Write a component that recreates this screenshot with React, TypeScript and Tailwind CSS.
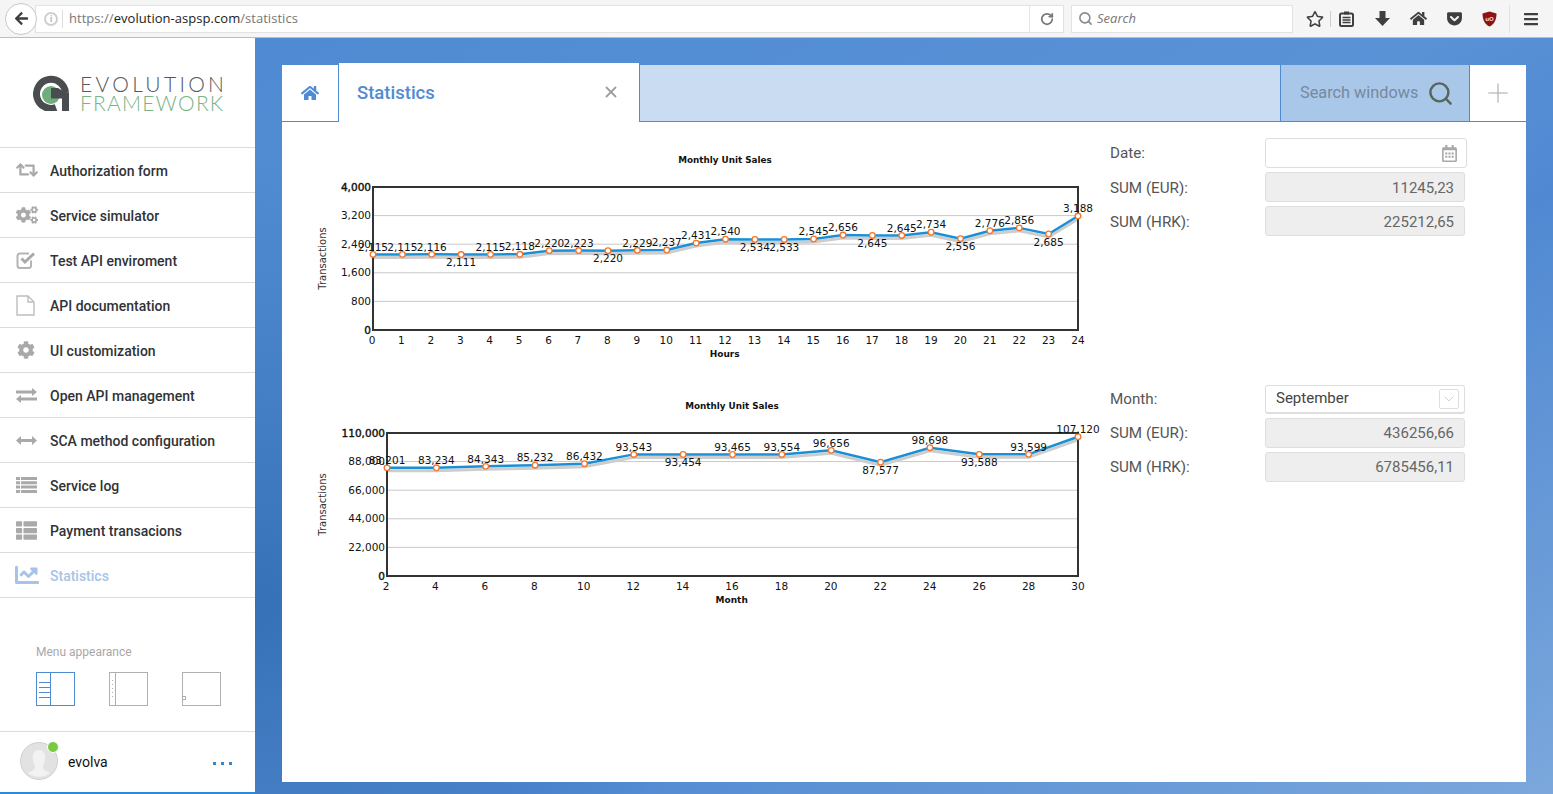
import React from 'react'
import {
  FaArrowLeft,
  FaBars,
  FaChartLine,
  FaCog,
  FaCogs,
  FaGetPocket,
  FaHome,
  FaRegCalendarAlt,
  FaRegStar,
  FaRetweet,
  FaThList,
} from 'react-icons/fa'
import { ChevronDown, Plus, RotateCw, Search, X } from 'lucide-react'

type Point = { label: string; value: number; below?: boolean }

type ChartProps = {
  box: { x: number; y: number; w: number; h: number }
  frame: { left: number; right: number; top: number; bottom: number }
  max: number
  yTicks: string[]
  xTicks: string[]
  xTitle: string
  points: Point[]
}

const hours: Point[] = [
  { label: '2,115', value: 2115 },
  { label: '2,115', value: 2115 },
  { label: '2,116', value: 2116 },
  { label: '2,111', value: 2111, below: true },
  { label: '2,115', value: 2115 },
  { label: '2,118', value: 2118 },
  { label: '2,220', value: 2220 },
  { label: '2,223', value: 2223 },
  { label: '2,220', value: 2220, below: true },
  { label: '2,229', value: 2229 },
  { label: '2,237', value: 2237 },
  { label: '2,431', value: 2431 },
  { label: '2,540', value: 2540 },
  { label: '2,534', value: 2534, below: true },
  { label: '2,533', value: 2533, below: true },
  { label: '2,545', value: 2545 },
  { label: '2,656', value: 2656 },
  { label: '2,645', value: 2645, below: true },
  { label: '2,645', value: 2645 },
  { label: '2,734', value: 2734 },
  { label: '2,556', value: 2556, below: true },
  { label: '2,776', value: 2776 },
  { label: '2,856', value: 2856 },
  { label: '2,685', value: 2685, below: true },
  { label: '3,188', value: 3188 },
]

const days: Point[] = [
  { label: '83,201', value: 83201 },
  { label: '83,234', value: 83234 },
  { label: '84,343', value: 84343 },
  { label: '85,232', value: 85232 },
  { label: '86,432', value: 86432 },
  { label: '93,543', value: 93543 },
  { label: '93,454', value: 93454, below: true },
  { label: '93,465', value: 93465 },
  { label: '93,554', value: 93554 },
  { label: '96,656', value: 96656 },
  { label: '87,577', value: 87577, below: true },
  { label: '98,698', value: 98698 },
  { label: '93,588', value: 93588, below: true },
  { label: '93,599', value: 93599 },
  { label: '107,120', value: 107120 },
]

const CheckIcon = () => (
  <svg width="21" height="19" viewBox="0 0 21 19" fill="none">
    <path d="M15 9.500 V14.500 a2.500 2.500 0 0 1 -2.500 2.500 H4 a2.500 2.500 0 0 1 -2.500 -2.500 V5 A2.500 2.500 0 0 1 4 2.500 H13" stroke="#b4b4b4" strokeWidth="2" />
    <path d="M5.500 7.500 L9 11 L18 2.500" stroke="#a9a9a9" strokeWidth="3" />
  </svg>
)

const FileIcon = () => (
  <svg width="19" height="21" viewBox="0 0 19 21" fill="none" stroke="#bdbdbd" strokeWidth="1.400">
    <path d="M1 1 H12 L18 7 V20 H1z" />
    <path d="M12 1 V7 H18" />
  </svg>
)

const SwapIcon = () => (
  <svg width="21" height="15" viewBox="0 0 21 15" fill="#a9a9a9">
    <path d="M0 2.500 H16 V0 L21 4 L16 8 V5.500 H0z" />
    <path d="M21 9.500 H5 V7 L0 11 L5 15 V12.500 H21z" />
  </svg>
)

const WideArrowIcon = () => (
  <svg width="21" height="9" viewBox="0 0 21 9" fill="#a9a9a9">
    <path d="M0 4.500 L5 0 V3 H16 V0 L21 4.500 L16 9 V6 H5 V9z" />
  </svg>
)

const ListIcon = () => (
  <svg width="21" height="16" viewBox="0 0 21 16" fill="#a9a9a9">
    <path d="M0 0 H4 V3 H0z M5 0 H21 V3 H5z M0 4.300 H4 V7.300 H0z M5 4.300 H21 V7.300 H5z M0 8.600 H4 V11.600 H0z M5 8.600 H21 V11.600 H5z M0 13 H4 V16 H0z M5 13 H21 V16 H5z" />
  </svg>
)

const menu = [
  { label: 'Authorization form', icon: <FaRetweet size={22} /> },
  { label: 'Service simulator', icon: <FaCogs size={22} /> },
  { label: 'Test API enviroment', icon: <CheckIcon /> },
  { label: 'API documentation', icon: <FileIcon /> },
  { label: 'UI customization', icon: <span className="pl-px"><FaCog size={18} /></span> },
  { label: 'Open API management', icon: <SwapIcon /> },
  { label: 'SCA method configuration', icon: <WideArrowIcon /> },
  { label: 'Service log', icon: <ListIcon /> },
  { label: 'Payment transacions', icon: <FaThList size={21} /> },
]

// chart is drawn in page coordinates, the viewBox just crops to the box
const Chart: React.FC<ChartProps> = ({ box, frame, max, yTicks, xTicks, xTitle, points }) => {
  const plotW = frame.right - frame.left
  const plotH = frame.bottom - frame.top
  const centerX = (frame.left + frame.right) / 2
  const centerY = (frame.top + frame.bottom) / 2
  const coords = points.map((p, i) => ({
    ...p,
    x: frame.left + (i * plotW) / (points.length - 1),
    y: frame.bottom - (p.value / max) * plotH,
  }))
  const line = coords.map((c) => `${c.x},${c.y}`).join(' ')
  const shadow = coords.map((c) => `${c.x},${c.y + 3}`).join(' ')

  return (
    <svg
      width={box.w}
      height={box.h}
      viewBox={`${box.x} ${box.y} ${box.w} ${box.h}`}
      className="shrink-0"
      style={{ fontFamily: '"DejaVu Sans", sans-serif' }}
    >
      {yTicks.map((_, i) =>
        i > 0 && i < yTicks.length - 1 ? (
          <line
            key={i}
            x1={frame.left}
            x2={frame.right}
            y1={frame.bottom - (i * plotH) / (yTicks.length - 1)}
            y2={frame.bottom - (i * plotH) / (yTicks.length - 1)}
            stroke="#c9c9c9"
          />
        ) : null,
      )}
      <text x={centerX - 0.5} y={frame.top - 24.5} textAnchor="middle" fontSize="8.800" fontWeight="bold" fill="#111">
        Monthly Unit Sales
      </text>
      <text transform={`translate(326 ${centerY}) rotate(-90)`} textAnchor="middle" fontSize="10" fill="#333">
        Transactions
      </text>
      <text x={centerX - 0.8} y={frame.bottom + 27} textAnchor="middle" fontSize="9" fontWeight="bold" fill="#111">
        {xTitle}
      </text>
      {yTicks.map((t, i) => (
        <text
          key={t}
          x={frame.left - 2}
          y={frame.bottom - (i * plotH) / (yTicks.length - 1) + 3.5}
          textAnchor="end"
          fontSize="10.500"
          fill="#111"
          stroke={i === 0 || i === yTicks.length - 1 ? '#111' : 'none'}
          strokeWidth="0.4"
        >
          {t}
        </text>
      ))}
      {xTicks.map((t, i) => (
        <text
          key={t}
          x={frame.left - 1 + (i * (plotW + 1)) / (xTicks.length - 1)}
          y={frame.bottom + 14}
          textAnchor="middle"
          fontSize="10.500"
          fill="#111"
        >
          {t}
        </text>
      ))}
      <polyline points={shadow} fill="none" stroke="#cdcdcd" strokeWidth="3" />
      <rect x={frame.left} y={frame.top} width={plotW} height={plotH} fill="none" stroke="#333" strokeWidth="2" />
      <polyline points={line} fill="none" stroke="#1a8fd6" strokeWidth="2.500" />
      {coords.map((c, i) => (
        <circle key={i} cx={c.x} cy={c.y} r="2.800" fill="#fff" stroke="#f4762a" strokeWidth="1.300" />
      ))}
      {coords.map((c, i) => (
        <text key={i} x={c.x} y={c.below ? c.y + 11.5 : c.y - 3.8} textAnchor="middle" fontSize="10.500" fill="#111">
          {c.label}
        </text>
      ))}
    </svg>
  )
}

const Logo = () => (
  <div className="flex items-center h-[36px]">
    <svg width="36" height="36" viewBox="0 0 36 36" className="shrink-0">
      <path d="M23 32.500 A14.500 14.500 0 1 1 32.500 18" fill="none" stroke="#4a4d4f" strokeWidth="7" />
      <circle cx="18" cy="20" r="9" fill="#6fae7c" />
      <path d="M18 13 H25 L36 20 H29 V23.500 H18z" fill="#4a4d4f" />
      <rect x="29" y="18" width="7" height="18" fill="#4a4d4f" />
    </svg>
    <div className="ml-[11px] font-['Lato',sans-serif] font-light text-[21px] leading-[19px]">
      <div className="text-[#55585a] tracking-[3.300px] whitespace-nowrap">EVOLUTION</div>
      <div className="text-[#79b488] tracking-[1.200px] whitespace-nowrap">FRAMEWORK</div>
    </div>
  </div>
)

const Sidebar = () => (
  <aside className="w-[255px] shrink-0 bg-white border-b-2 border-[#2f88d8] flex flex-col font-['Roboto',sans-serif]">
    <div className="h-[110px] flex items-center pl-[33px] border-b border-[#dcdcdc]">
      <Logo />
    </div>
    {menu.map((m) => (
      <div key={m.label} className="h-[45px] flex items-center border-b border-[#dcdcdc]">
        <span className="w-[50px] pl-[16px] text-[#a9a9a9] flex items-center">{m.icon}</span>
        <span className="pt-[3px] text-[14px] font-medium text-[#2f3338]">{m.label}</span>
      </div>
    ))}
    <div className="h-[45px] flex items-center border-b border-[#dcdcdc]">
      <span className="w-[50px] pl-[15px] text-[#a6c4e8] flex items-center">
        <FaChartLine size={24} />
      </span>
      <span className="pt-[3px] text-[14px] font-medium text-[#a6c4e8]">Statistics</span>
    </div>
    <div className="h-[134px] border-b border-[#dcdcdc] pl-[36px] pt-[46px]">
      <div className="text-[12px] leading-[16px] text-[#a8a8a8]">Menu appearance</div>
      <div className="flex gap-[34px] mt-[12px]">
        <svg width="39" height="34" viewBox="0 0 39 34" fill="none" stroke="#4f8bd0">
          <rect x="0.5" y="0.5" width="38" height="33" />
          <path d="M14.5 0.5 V33.5 M3 10.5 H14 M3 15.5 H14 M3 20.5 H14 M3 25.5 H14" />
        </svg>
        <svg width="39" height="34" viewBox="0 0 39 34" fill="none" stroke="#b0b0b0">
          <rect x="0.5" y="0.5" width="38" height="33" />
          <path d="M6.5 0.5 V33.5" />
          <path d="M3.5 8 V26" strokeDasharray="1 3" />
        </svg>
        <svg width="39" height="34" viewBox="0 0 39 34" fill="none" stroke="#b0b0b0">
          <rect x="0.5" y="0.5" width="38" height="33" />
          <rect x="0.5" y="24.5" width="3" height="3" />
        </svg>
      </div>
    </div>
    <div className="flex-1 flex items-center pl-[20px] relative">
      <div className="relative w-[38px] h-[38px] shrink-0 mb-[2px]">
        <svg width="38" height="38" viewBox="0 0 38 38">
          <circle cx="19" cy="19" r="18.500" fill="#e2e2e2" stroke="#cfcfcf" />
          <path d="M19 8 c5 0 7 4 6 10 c-.5 3 -2 5 -2 7 c0 3 4 4 7 6 a18 18 0 0 1 -22 0 c3 -2 7 -3 7 -6 c0 -2 -1.500 -4 -2 -7 c-1 -6 1 -10 6 -10z" fill="#f2f2f2" />
        </svg>
        <span className="absolute right-[-1px] top-[-1px] w-[12px] h-[12px] rounded-full bg-[#7ac943] border border-white" />
      </div>
      <span className="ml-[10px] text-[14px] text-[#111]">evolva</span>
      <span className="absolute left-[213px] top-[30px] flex gap-[5px]">
        <i className="w-[3px] h-[3px] bg-[#2f88d8]" />
        <i className="w-[3px] h-[3px] bg-[#2f88d8]" />
        <i className="w-[3px] h-[3px] bg-[#2f88d8]" />
      </span>
    </div>
  </aside>
)

const BrowserBar = () => (
  <header className="h-[38px] shrink-0 bg-[#f5f5f5] border-b border-[#bdbdbd] flex items-center pl-[5px] font-['Open_Sans',sans-serif]">
    <div className="relative z-10 w-[32px] h-[32px] rounded-full bg-white border border-[#c8c8c8] flex items-center justify-center text-[#3d3d3d]">
      <FaArrowLeft size={15} />
    </div>
    <div className="-ml-[2px] w-[1029px] h-[28px] bg-white border border-[#e2e2e2] flex items-center">
      <span className="relative ml-[8px] w-[14px] h-[14px] rounded-full border-2 border-[#cfcfcf] text-[9px] leading-[10px] text-center text-[#bbb] font-bold">
        i
      </span>
      <span className="ml-[4px] w-px h-[18px] bg-[#ddd]" />
      <span className="ml-[6px] pt-px text-[13px] tracking-[0.04px] text-[#777]">
        https://<span className="text-[#1b1b1b]">evolution-aspsp.com</span>/statistics
      </span>
      <span className="ml-auto w-px h-[26px] bg-[#e4e4e4]" />
      <span className="w-[33px] flex justify-center">
        <RotateCw size={14} strokeWidth={3} className="text-[#777]" />
      </span>
    </div>
    <div className="ml-[7px] w-[222px] h-[28px] bg-white border border-[#e2e2e2] flex items-center">
      <Search size={15} strokeWidth={2.5} className="ml-[6px] text-[#8a8a8a]" />
      <span className="ml-[4px] pt-px text-[13px] italic text-[#777]">Search</span>
    </div>
    <FaRegStar size={18} className="ml-[13px] text-[#3f3f3f]" />
    <span className="ml-[6px] w-px h-[16px] bg-[#ccc]" />
    <svg width="15" height="16" viewBox="0 0 15 16" className="ml-[8px] text-[#3f3f3f]">
      <rect x="1" y="2.500" width="13" height="12.500" rx="1.500" fill="none" stroke="currentColor" strokeWidth="2" />
      <rect x="5" y="0.500" width="5" height="3" fill="currentColor" />
      <path d="M3.500 6.500 H11.500 M3.500 9 H11.500 M3.500 11.500 H11.500" stroke="currentColor" strokeWidth="1.300" />
    </svg>
    <svg width="15" height="15" viewBox="0 0 15 15" className="ml-[21px] text-[#3f3f3f]" fill="currentColor">
      <path d="M4.500 0 H10.500 V7 H15 L7.500 15 L0 7 H4.500z" />
    </svg>
    <FaHome size={17} className="ml-[20px] text-[#3f3f3f]" />
    <FaGetPocket size={17} className="ml-[19px] text-[#3f3f3f]" />
    <svg width="15" height="16" viewBox="0 0 15 16" className="ml-[19px]">
      <path d="M7.500 0.500 L14.500 2.500 C14.500 9 12 13.500 7.500 15.500 C3 13.500 0.500 9 0.500 2.500z" fill="#8f1217" />
      <text x="7.500" y="9.500" textAnchor="middle" fontSize="6" fontWeight="bold" fill="#f3dcdc">uO</text>
    </svg>
    <span className="ml-[12px] w-px h-[28px] bg-[#e0e0e0]" />
    <FaBars size={16} className="ml-[13px] text-[#3f3f3f]" />
  </header>
)

const TabBar = () => (
  <div className="h-[57px] shrink-0 flex bg-[#c9dcf2] border-b border-[#4f8bd2]">
    <div className="w-[57px] bg-white border-r border-[#4f8bd2] flex items-center justify-center text-[#4f8bd2]">
      <FaHome size={18} />
    </div>
    <div className="w-[301px] h-[59px] -mt-[2px] bg-white border-r border-[#4f8bd2] flex items-center pl-[18px] pt-[3px] relative z-10">
      <span className="text-[18.500px] font-medium text-[#4f8bd2]">Statistics</span>
      <X size={18} strokeWidth={2.5} className="absolute left-[263px] top-[20px] text-[#a0a0a0]" />
    </div>
    <div className="flex-1" />
    <div className="w-[189px] bg-[#a9c7e9] border-l border-[#4f8bd2] flex items-center pl-[19px] pt-px">
      <span className="text-[16.300px] text-[#76899e] whitespace-nowrap">Search windows</span>
      <Search size={27} strokeWidth={2.2} className="ml-[9px] text-[#56675f] shrink-0" />
    </div>
    <div className="w-[57px] bg-white border-l border-[#4f8bd2] flex items-center justify-center text-[#a8a8a8]">
      <Plus size={32} strokeWidth={0.8} />
    </div>
  </div>
)

// the upper form sits half a pixel lower in the original, hence nudge
const ReadOnly: React.FC<{ label: string; value: string; nudge?: boolean }> = ({ label, value, nudge }) => (
  <div className="flex items-center h-[30px]">
    <span className={nudge ? 'w-[155px] pt-[2px] text-[15.200px] text-[#555]' : 'w-[155px] text-[15.200px] text-[#555]'}>{label}</span>
    <div
      className={
        nudge
          ? 'w-[200px] h-[30px] pt-[2px] bg-[#eeeeee] border border-[#dedede] rounded-[3px] flex items-center justify-end pr-[10px] text-[15px] text-[#666]'
          : 'w-[200px] h-[30px] bg-[#eeeeee] border border-[#dedede] rounded-[3px] flex items-center justify-end pr-[10px] text-[15px] text-[#666]'
      }
    >
      {value}
    </div>
  </div>
)

export default function App() {
  return (
    <div className="w-[1553px] h-[794px] flex flex-col overflow-hidden font-['Roboto',sans-serif]">
      <BrowserBar />
      <div className="flex-1 flex min-h-0">
        <Sidebar />
        <main className="flex-1 flex flex-col pt-[27px] px-[27px] pb-[12px] bg-[radial-gradient(circle_at_0%_75%,#3670b6_0%,rgba(54,112,182,0)_32%),linear-gradient(150deg,#4f8ad2_0%,#5a92d6_45%,#5089d2_60%,#7ba7dc_100%)]">
          <div className="flex-1 flex flex-col bg-white">
            <TabBar />
            <div className="pl-[28px] pt-[8px]">
              <div className="flex">
                <Chart
                  box={{ x: 310, y: 130, w: 790, h: 235 }}
                  frame={{ left: 373, right: 1078, top: 187, bottom: 330 }}
                  max={4000}
                  yTicks={['0', '800', '1,600', '2,400', '3,200', '4,000']}
                  xTicks={Array.from({ length: 25 }, (_, i) => String(i))}
                  xTitle="Hours"
                  points={hours}
                />
                <div className="ml-[10px] pt-[8px] flex flex-col gap-[4px]">
                  <div className="flex items-center h-[30px]">
                    <span className="w-[155px] text-[15.200px] text-[#555]">Date:</span>
                    <div className="w-[202px] h-[30px] bg-white border border-[#dedede] rounded-[3px] flex items-center justify-end pr-[8px] text-[#a8a8a8]">
                      <FaRegCalendarAlt size={17} />
                    </div>
                  </div>
                  <ReadOnly label="SUM (EUR):" value="11245,23" nudge />
                  <ReadOnly label="SUM (HRK):" value="225212,65" nudge />
                </div>
              </div>
              <div className="flex mt-[15px]">
                <Chart
                  box={{ x: 310, y: 380, w: 790, h: 235 }}
                  frame={{ left: 387, right: 1078, top: 433, bottom: 576 }}
                  max={110000}
                  yTicks={['0', '22,000', '44,000', '66,000', '88,000', '110,000']}
                  xTicks={Array.from({ length: 15 }, (_, i) => String((i + 1) * 2))}
                  xTitle="Month"
                  points={days}
                />
                <div className="ml-[10px] pt-[4px] flex flex-col gap-[4px]">
                  <div className="flex items-center h-[30px]">
                    <span className="w-[155px] text-[15.200px] text-[#555]">Month:</span>
                    <div className="w-[200px] h-[29px] bg-white border border-[#dedede] border-b-2 rounded-[3px] flex items-center pl-[10px] pr-[5px] text-[15px] text-[#444]">
                      September
                      <span className="ml-auto w-[20px] h-[20px] border border-[#dedede] rounded-[2px] flex items-center justify-center text-[#bbb]">
                        <ChevronDown size={16} strokeWidth={1} />
                      </span>
                    </div>
                  </div>
                  <ReadOnly label="SUM (EUR):" value="436256,66" />
                  <ReadOnly label="SUM (HRK):" value="6785456,11" />
                </div>
              </div>
            </div>
          </div>
        </main>
      </div>
    </div>
  )
}
